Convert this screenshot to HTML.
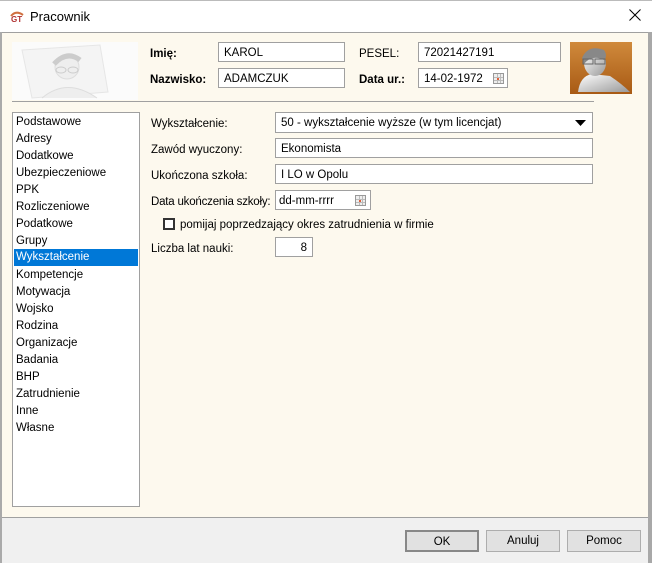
<!DOCTYPE html>
<html><head><meta charset="utf-8"><style>
*{box-sizing:border-box;margin:0;padding:0}
body{width:652px;height:563px;overflow:hidden;background:#fff;font-family:"Liberation Sans",Tahoma,sans-serif;font-size:11.5px;color:#000;position:relative}
.a{position:absolute}
.inp{position:absolute;background:#fff;border:1px solid #a0a0a0;height:20px;padding:3px 5px 1px;line-height:14px;font-size:11.5px;white-space:nowrap}
.lbl{position:absolute;font-size:11.5px;line-height:14px;white-space:nowrap;margin-top:1px}
.b{font-weight:bold}
.li{position:absolute;left:1px;width:124px;height:17px;line-height:19px;padding-left:2px}
.btn{position:absolute;top:530px;width:74px;height:22px;border:1px solid #adadad;background:#e1e1e1;text-align:center;line-height:21px}
.cal{position:absolute;width:11px;height:11px;background:
linear-gradient(#bbb,#bbb) 0 3px/11px 1px no-repeat,
linear-gradient(#bbb,#bbb) 0 6px/11px 1px no-repeat,
linear-gradient(90deg,#bbb,#bbb) 3px 0/1px 11px no-repeat,
linear-gradient(90deg,#bbb,#bbb) 6px 0/1px 11px no-repeat,#eee;border:1px solid #999}
.cal i{position:absolute;left:3px;top:4px;width:2px;height:2px;background:#e0603c}
</style></head><body>
<div class="a" style="left:0;top:0;width:652px;height:32px;background:#fff;border-top:1px solid #bbb"></div>
<div class="a" style="left:10px;top:10px;width:13px;height:11px">
<svg width="14" height="12"><path d="M1 6 Q6 0 13 5" stroke="#d07040" stroke-width="2" fill="none"/><text x="1" y="12" font-size="8" font-weight="bold" fill="#b03030" font-family="Liberation Sans">GT</text></svg></div>
<div class="lbl" style="left:30px;top:9px;font-size:13px">Pracownik</div>
<svg class="a" style="left:629px;top:9px" width="12" height="12"><path d="M0.5 0.5 L11.5 11.5 M11.5 0.5 L0.5 11.5" stroke="#000" stroke-width="1"/></svg>
<div class="a" style="left:0;top:32px;width:652px;height:531px;background:#f0f0f0;border-left:2px solid #aaa;border-right:4px solid #a8a8a8"></div>
<div class="a" style="left:2px;top:32px;width:646px;height:486px;background:#fdf9ee;border-top:1px solid #a0a0a0;border-bottom:1px solid #a0a0a0"></div>
<div class="a" style="left:12px;top:42px;width:126px;height:58px;background:#fbfbfb"></div>
<svg class="a" style="left:12px;top:42px" width="126" height="58">
<path d="M10 8 L88 3 L96 50 L20 56 Z" fill="#f4f4f4" stroke="#e6e6e6"/>
<circle cx="55" cy="25" r="12" fill="#eee" stroke="#ddd"/>
<path d="M42 22 Q55 8 68 18" stroke="#ccc" stroke-width="5" fill="none"/>
<ellipse cx="49" cy="28" rx="5" ry="3" fill="none" stroke="#ccc"/><ellipse cx="61" cy="28" rx="5" ry="3" fill="none" stroke="#ccc"/>
<path d="M30 56 Q55 35 85 56" fill="#eee" stroke="#ddd"/>
</svg>
<div class="a" style="left:12px;top:101px;width:582px;height:1px;background:#a0a0a0"></div>
<div class="lbl b" style="left:150px;top:46px">Imię:</div>
<div class="inp" style="left:218px;top:42px;width:127px">KAROL</div>
<div class="lbl b" style="left:150px;top:72px">Nazwisko:</div>
<div class="inp" style="left:218px;top:68px;width:127px">ADAMCZUK</div>
<div class="lbl" style="left:359px;top:46px">PESEL:</div>
<div class="inp" style="left:418px;top:42px;width:143px">72021427191</div>
<div class="lbl b" style="left:359px;top:72px">Data ur.:</div>
<div class="inp" style="left:418px;top:68px;width:90px">14-02-1972</div>
<div class="cal" style="left:493px;top:73px"><i></i></div>
<svg class="a" style="left:570px;top:42px" width="62" height="52">
<defs><linearGradient id="g" x1="0" y1="0" x2="0" y2="1"><stop offset="0" stop-color="#d08a3c"/><stop offset="1" stop-color="#a85a14"/></linearGradient>
<linearGradient id="h" x1="0" y1="0" x2="1" y2="1"><stop offset="0" stop-color="#fff"/><stop offset="1" stop-color="#999"/></linearGradient></defs>
<rect width="62" height="52" fill="url(#g)"/>
<path d="M8 50 Q10 34 22 32 L40 34 Q52 42 60 50 Z" fill="url(#h)"/>
<ellipse cx="25" cy="21" rx="11" ry="13" fill="url(#h)"/>
<path d="M12 16 Q18 2 34 8 Q38 14 34 18 Q22 12 14 22 Z" fill="#888"/>
<rect x="13" y="17" width="10" height="5" fill="none" stroke="#666"/><rect x="25" y="17" width="10" height="5" fill="none" stroke="#666"/>
</svg>
<div class="a" style="left:12px;top:112px;width:128px;height:395px;background:#fff;border:1px solid #a0a0a0">
<div class="li" style="top:0">Podstawowe</div>
<div class="li" style="top:17px">Adresy</div>
<div class="li" style="top:34px">Dodatkowe</div>
<div class="li" style="top:51px">Ubezpieczeniowe</div>
<div class="li" style="top:68px">PPK</div>
<div class="li" style="top:85px">Rozliczeniowe</div>
<div class="li" style="top:102px">Podatkowe</div>
<div class="li" style="top:119px">Grupy</div>
<div class="li" style="top:136px;background:#0078d7;color:#fff;line-height:17px">Wykształcenie</div>
<div class="li" style="top:153px">Kompetencje</div>
<div class="li" style="top:170px">Motywacja</div>
<div class="li" style="top:187px">Wojsko</div>
<div class="li" style="top:204px">Rodzina</div>
<div class="li" style="top:221px">Organizacje</div>
<div class="li" style="top:238px">Badania</div>
<div class="li" style="top:255px">BHP</div>
<div class="li" style="top:272px">Zatrudnienie</div>
<div class="li" style="top:289px">Inne</div>
<div class="li" style="top:306px">Własne</div>
</div>
<div class="lbl" style="left:151px;top:116px">Wykształcenie:</div>
<div class="inp" style="left:275px;top:112px;width:318px;height:21px">50 - wykształcenie wyższe (w tym licencjat)</div>
<svg class="a" style="left:575px;top:119px" width="12" height="8"><path d="M0 1 L11 1 L5.5 7 Z" fill="#000"/></svg>
<div class="lbl" style="left:151px;top:142px">Zawód wyuczony:</div>
<div class="inp" style="left:275px;top:138px;width:318px">Ekonomista</div>
<div class="lbl" style="left:151px;top:168px">Ukończona szkoła:</div>
<div class="inp" style="left:275px;top:164px;width:318px">I LO w Opolu</div>
<div class="lbl" style="left:151px;top:194px;letter-spacing:-0.2px">Data ukończenia szkoły:</div>
<div class="inp" style="left:275px;top:190px;width:96px;padding-left:3px">dd-mm-rrrr</div>
<div class="cal" style="left:355px;top:195px"><i></i></div>
<div class="a" style="left:163px;top:218px;width:12px;height:12px;border:2px solid #333;background:#fff"></div>
<div class="lbl" style="left:180px;top:217px">pomijaj poprzedzający okres zatrudnienia w firmie</div>
<div class="lbl" style="left:151px;top:241px">Liczba lat nauki:</div>
<div class="inp" style="left:275px;top:237px;width:38px;text-align:right">8</div>
<div class="btn" style="left:405px;border:2px solid #888">OK</div>
<div class="btn" style="left:486px">Anuluj</div>
<div class="btn" style="left:567px">Pomoc</div>
</body></html>
